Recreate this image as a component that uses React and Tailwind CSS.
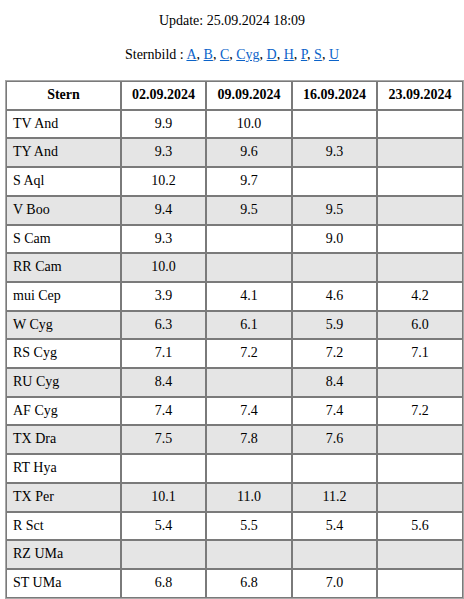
import React from "react";

const dates = ["02.09.2024", "09.09.2024", "16.09.2024", "23.09.2024"];

const rows = [
  ["TV And", "9.9", "10.0", "", ""],
  ["TY And", "9.3", "9.6", "9.3", ""],
  ["S Aql", "10.2", "9.7", "", ""],
  ["V Boo", "9.4", "9.5", "9.5", ""],
  ["S Cam", "9.3", "", "9.0", ""],
  ["RR Cam", "10.0", "", "", ""],
  ["mui Cep", "3.9", "4.1", "4.6", "4.2"],
  ["W Cyg", "6.3", "6.1", "5.9", "6.0"],
  ["RS Cyg", "7.1", "7.2", "7.2", "7.1"],
  ["RU Cyg", "8.4", "", "8.4", ""],
  ["AF Cyg", "7.4", "7.4", "7.4", "7.2"],
  ["TX Dra", "7.5", "7.8", "7.6", ""],
  ["RT Hya", "", "", "", ""],
  ["TX Per", "10.1", "11.0", "11.2", ""],
  ["R Sct", "5.4", "5.5", "5.4", "5.6"],
  ["RZ UMa", "", "", "", ""],
  ["ST UMa", "6.8", "6.8", "7.0", ""],
];

const letters = ["A", "B", "C", "Cyg", "D", "H", "P", "S", "U"];

const serif = "font-['Liberation_Serif','Times_New_Roman',serif] text-[14px]";
const cell = `${serif} border border-[#7a7a7a] py-[4px] leading-[18.7px]`;

const App = () => {
  return (
    <div className={`min-h-[599px] bg-white text-black ${serif}`}>
      <p className="pt-[13px] text-center leading-[16px]">Update: 25.09.2024 18:09</p>
      <p className="mt-[18px] text-center leading-[16px]">
        Sternbild :{" "}
        {letters.map((l, i) => (
          <span key={l}>
            <a href="#" className="text-[#0b63c9] underline">
              {l}
            </a>
            {i < letters.length - 1 && ", "}
          </span>
        ))}
      </p>
      <div className="mt-[17px] px-[5px]">
        <table className={`${serif} w-[457px] table-fixed border-separate border-spacing-0 border border-[#a8a8a8]`}>
          <colgroup>
            <col className="w-[115px]" />
            <col className="w-[85px]" />
            <col className="w-[86px]" />
            <col className="w-[85px]" />
            <col className="w-[86px]" />
          </colgroup>
          <thead>
            <tr>
              <th className={`${cell} font-bold text-center`}>Stern</th>
              {dates.map((d) => (
                <th key={d} className={`${cell} font-bold text-center`}>
                  {d}
                </th>
              ))}
            </tr>
          </thead>
          <tbody>
            {rows.map((r, i) => (
              <tr key={r[0]} className={i % 2 === 1 ? "bg-[#e5e5e5]" : "bg-white"}>
                <td className={`${cell} text-left pl-[6px]`}>{r[0]}</td>
                {r.slice(1).map((v, j) => (
                  <td key={j} className={`${cell} text-center`}>
                    {v}
                  </td>
                ))}
              </tr>
            ))}
          </tbody>
        </table>
      </div>
    </div>
  );
};

export default App;
